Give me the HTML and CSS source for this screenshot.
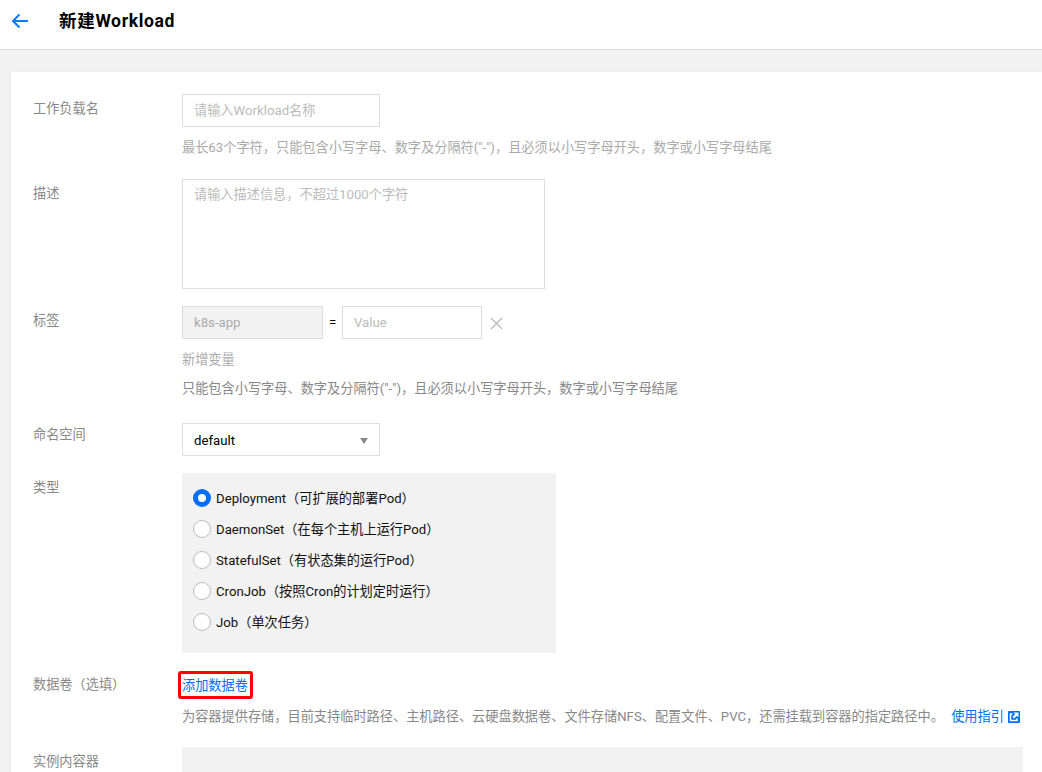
FILE: index.html
```html
<!DOCTYPE html>
<html lang="zh-CN">
<head>
<meta charset="utf-8">
<title>新建Workload</title>
<link rel="stylesheet" href="styles.css">
</head>
<body>
<header class="topbar">
  <svg class="back" width="18" height="16" viewBox="0 0 18 16" aria-hidden="true"><path d="M17 8H2.500M8.500 1.500 2 8l6.500 6.500" fill="none" stroke="#0b7cff" stroke-width="2"/></svg>
  <h1 class="title">新建Workload</h1>
</header>
<main class="card">
  <div class="row row-name">
    <div class="label">工作负载名</div>
    <div class="field">
      <div class="input input-name placeholder">请输入Workload名称</div>
      <p class="hint hint-name">最长63个字符，只能包含小写字母、数字及分隔符("-")，且必须以小写字母开头，数字或小写字母结尾</p>
    </div>
  </div>
  <div class="row row-desc">
    <div class="label">描述</div>
    <div class="field">
      <div class="textarea placeholder">请输入描述信息，不超过1000个字符</div>
    </div>
  </div>
  <div class="row row-tags">
    <div class="label">标签</div>
    <div class="field">
      <div class="tag-line">
        <div class="input input-key">k8s-app</div>
        <span class="eq">=</span>
        <div class="input input-value placeholder">Value</div>
        <svg class="close" width="13" height="13" viewBox="0 0 13 13" aria-hidden="true"><path d="M1 1l11 11M12 1 1 12" fill="none" stroke="#b5b5b5" stroke-width="1.100"/></svg>
      </div>
      <div class="add-var">新增变量</div>
      <p class="hint hint-tags">只能包含小写字母、数字及分隔符("-")，且必须以小写字母开头，数字或小写字母结尾</p>
    </div>
  </div>
  <div class="row row-ns">
    <div class="label label-ns">命名空间</div>
    <div class="field">
      <div class="input select">default<span class="caret"></span></div>
    </div>
  </div>
  <div class="row row-type">
    <div class="label">类型</div>
    <div class="field">
      <div class="type-box">
        <div class="radio-row"><span class="radio radio-on"></span>Deployment（可扩展的部署Pod）</div>
        <div class="radio-row"><span class="radio"></span>DaemonSet（在每个主机上运行Pod）</div>
        <div class="radio-row"><span class="radio"></span>StatefulSet（有状态集的运行Pod）</div>
        <div class="radio-row"><span class="radio"></span>CronJob（按照Cron的计划定时运行）</div>
        <div class="radio-row"><span class="radio"></span>Job（单次任务）</div>
      </div>
    </div>
  </div>
  <div class="row row-vol">
    <div class="label label-vol">数据卷（选填）</div>
    <div class="field">
      <div class="vol-link"><a class="link" href="#">添加数据卷</a><span class="marker"></span></div>
      <p class="hint hint-vol">为容器提供存储，目前支持临时路径、主机路径、云硬盘数据卷、文件存储NFS、配置文件、PVC，还需挂载到容器的指定路径中。 <a class="link guide" href="#">使用指引<svg class="ext" width="12" height="12" viewBox="0 0 12 12" aria-hidden="true"><rect width="12" height="12" rx="1" fill="#006eff"/><path d="M4.500 3H2.500v6.500H9V7.500" fill="none" stroke="#fff" stroke-width="1.600"/><path d="M5.500 1.500h5v5L8.800 4.800 6.200 7.500 4.500 5.800l2.700-2.600z" fill="#fff"/></svg></a></p>
    </div>
  </div>
  <div class="row row-cont">
    <div class="label">实例内容器</div>
    <div class="field"><div class="cont-box"></div></div>
  </div>
</main>
</body>
</html>
```
FILE: styles.css
```css
* { box-sizing: border-box; }
html, body { margin: 0; height: 772px; overflow: hidden; }
body {
  background: #f2f2f2;
  color: #000;
  font: 13.2px/18px Roboto, "Noto Sans CJK SC", sans-serif;
}
.topbar {
  display: flex;
  align-items: center;
  height: 50px;
  padding: 0 0 8px 11px;
  background: #fff;
  border-bottom: 1px solid #ddd;
}
.back { flex: none; }
.title {
  margin: 0 0 0 30px;
  font-size: 17.6px;
  font-weight: 700;
  line-height: 26px;
  letter-spacing: .6px;
  color: #000;
}
.card {
  margin: 22px 0 0 11px;
  height: 700px;
  padding: 22px 19px 0 22px;
  background: #fff;
  box-shadow: 0 1px 3px rgba(0,0,0,.06);
}
.row { display: flex; }
.label {
  flex: none;
  width: 149px;
  padding-top: 6px;
  color: #888;
}
.label-ns { padding-top: 3px; }
.label-vol { padding-top: 5px; }
.field { flex: 1; min-width: 0; }
.input {
  display: flex;
  align-items: center;
  height: 33px;
  padding: 0 11px;
  border: 1px solid #ddd;
  background: #fff;
}
.placeholder { color: #bbb; }
.input-name { width: 198px; }
.hint { margin: 0; color: #888; }
.hint-name { margin-top: 12px; color: #aaa; }
.row-desc { margin-top: 22px; }
.textarea {
  width: 363px;
  height: 110px;
  padding: 6px 11px;
  border: 1px solid #ddd;
}
.row-tags { margin-top: 17px; }
.tag-line { display: flex; align-items: center; }
.input-key { width: 141px; background: #f2f2f2; color: #aaa; }
.eq { width: 19px; text-align: center; color: #000; }
.input-value { width: 140px; }
.close { margin: 2px 0 0 8px; }
.add-var { margin-top: 12px; color: #aaa; }
.hint-tags { margin-top: 11px; }
.row-ns { margin-top: 25px; }
.select { position: relative; width: 198px; padding-top: 2px; color: #000; }
.caret {
  position: absolute;
  right: 11px;
  top: 14px;
  border-style: solid;
  border-width: 6px 4.5px 0;
  border-color: #888 transparent transparent;
}
.row-type { margin-top: 17px; }
.type-box {
  width: 374px;
  height: 180px;
  padding: 10px 11px 0;
  background: #f2f2f2;
}
.radio-row {
  display: flex;
  align-items: center;
  height: 30.8px;
  padding-top: 2px;
  color: #111;
}
.radio {
  flex: none;
  width: 18px;
  height: 18px;
  margin: 0 5px 2px 0;
  border: 1px solid #bbb;
  border-radius: 50%;
  background: #fff;
}
.radio-on { border: 5px solid #006eff; }
.row-vol { margin-top: 18px; }
.vol-link { position: relative; line-height: 30px; height: 28px; }
.link { color: #006eff; text-decoration: none; }
.marker {
  position: absolute;
  left: -4px;
  top: 0;
  width: 75px;
  height: 28px;
  border: 3px solid #f00;
  border-radius: 3px;
}
.hint-vol { margin-top: 9px; white-space: nowrap; }
.guide { margin-left: 4px; }
.ext { margin-left: 4px; vertical-align: -2px; }
.row-cont { margin-top: 21px; }
.cont-box { width: 841px; height: 60px; background: #f2f2f2; }
```
